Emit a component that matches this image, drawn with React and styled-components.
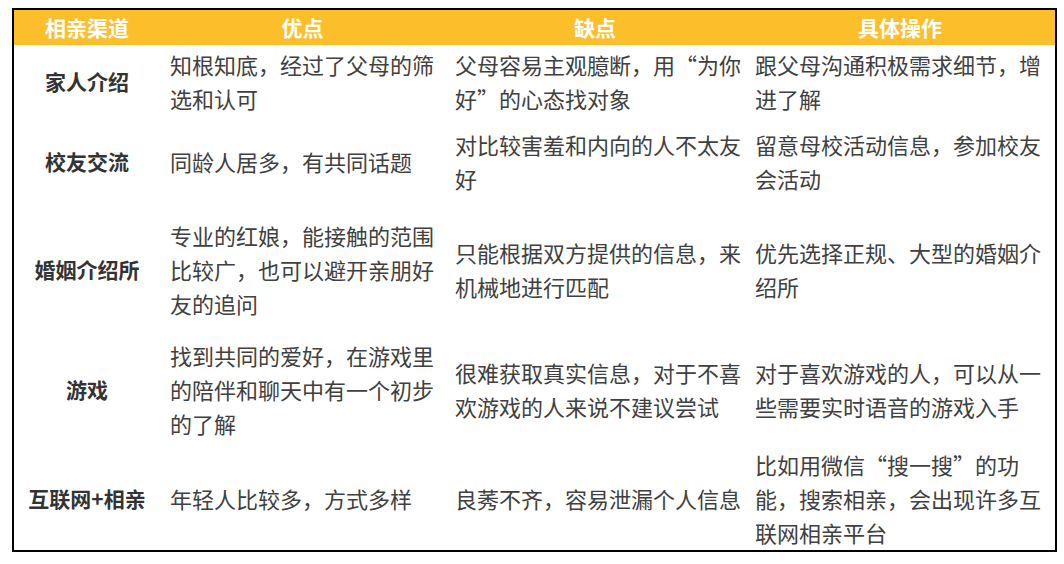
import styled, { createGlobalStyle } from "styled-components"

const GlobalStyle = createGlobalStyle`
  html, body {
    margin: 0;
    padding: 0;
    background: #ffffff;
  }
  body {
    font-family: "Noto Sans CJK SC", "Noto Sans", sans-serif;
  }
`

const COLUMNS = "146px 285px 300px 310px"

const Table = styled.div`
  margin: 8px 0 0 12px;
  width: 1041px;
  border: 2px solid #000000;
  background: #ffffff;
`

const HeaderRow = styled.div`
  display: grid;
  grid-template-columns: ${COLUMNS};
  height: 35px;
  background: #fcbf2b;
`

const HeaderCell = styled.div`
  display: flex;
  align-items: center;
  justify-content: center;
  color: #ffffff;
  font-size: 21px;
  font-weight: 700;
  line-height: 1;
`

const Row = styled.div`
  display: grid;
  grid-template-columns: ${COLUMNS};
  height: ${(p) => p.$height}px;
`

const NameCell = styled.div`
  display: flex;
  align-items: center;
  justify-content: center;
  color: #333333;
  font-size: 21px;
  font-weight: 700;
  white-space: nowrap;
`

const TextCell = styled.div`
  display: flex;
  align-items: center;
  padding: 0 2px 0 10px;
  color: #404040;
  font-size: 22px;
  line-height: 34px;
`

const headers = ["相亲渠道", "优点", "缺点", "具体操作"]

const rows = [
  {
    height: 72,
    name: "家人介绍",
    pros: "知根知底，经过了父母的筛选和认可",
    cons: "父母容易主观臆断，用“为你好”的心态找对象",
    how: "跟父母沟通积极需求细节，增进了解",
  },
  {
    height: 88,
    name: "校友交流",
    pros: "同龄人居多，有共同话题",
    cons: "对比较害羞和内向的人不太友好",
    how: "留意母校活动信息，参加校友会活动",
  },
  {
    height: 128,
    name: "婚姻介绍所",
    pros: "专业的红娘，能接触的范围比较广，也可以避开亲朋好友的追问",
    cons: "只能根据双方提供的信息，来机械地进行匹配",
    how: "优先选择正规、大型的婚姻介绍所",
  },
  {
    height: 112,
    name: "游戏",
    pros: "找到共同的爱好，在游戏里的陪伴和聊天中有一个初步的了解",
    cons: "很难获取真实信息，对于不喜欢游戏的人来说不建议尝试",
    how: "对于喜欢游戏的人，可以从一些需要实时语音的游戏入手",
  },
  {
    height: 105,
    name: "互联网+相亲",
    pros: "年轻人比较多，方式多样",
    cons: "良莠不齐，容易泄漏个人信息",
    how: "比如用微信“搜一搜”的功能，搜索相亲，会出现许多互联网相亲平台",
  },
]

export default function App() {
  return (
    <>
      <GlobalStyle />
      <Table>
        <HeaderRow>
          {headers.map((h) => (
            <HeaderCell key={h}>{h}</HeaderCell>
          ))}
        </HeaderRow>
        {rows.map((row) => (
          <Row key={row.name} $height={row.height}>
            <NameCell>{row.name}</NameCell>
            <TextCell>{row.pros}</TextCell>
            <TextCell>{row.cons}</TextCell>
            <TextCell>{row.how}</TextCell>
          </Row>
        ))}
      </Table>
    </>
  )
}
